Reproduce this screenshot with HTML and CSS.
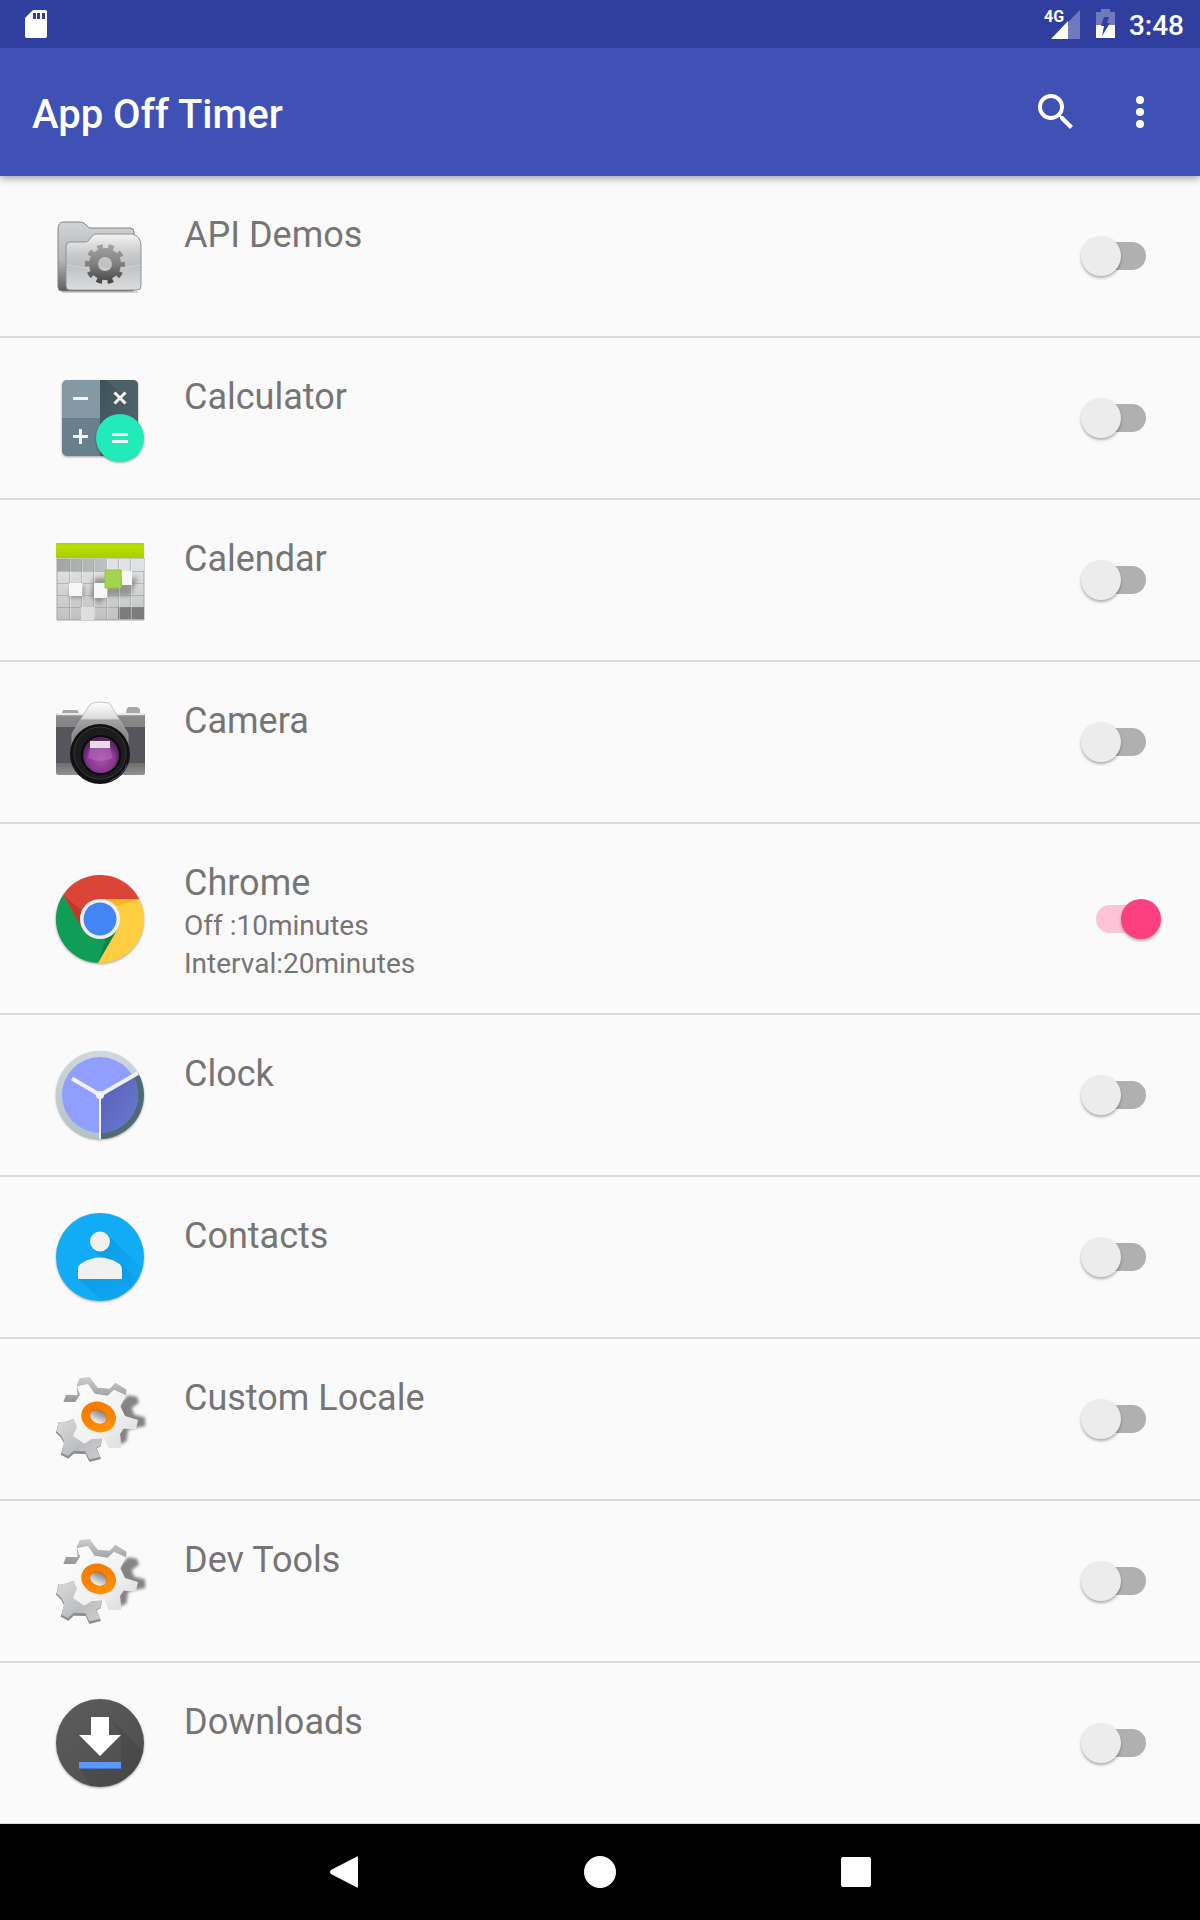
FILE: index.html
```html
<!DOCTYPE html>
<html lang="en">
<head>
<meta charset="utf-8">
<meta name="viewport" content="width=device-width, initial-scale=1">
<title>App Off Timer</title>
<link rel="stylesheet" href="styles.css">
</head>
<body>
<svg class="defs" width="0" height="0" aria-hidden="true">
  <defs>
    <linearGradient id="gearFace" x1="0" y1="0" x2="1" y2="1"><stop offset="0" stop-color="#fff"/><stop offset=".6" stop-color="#f1f1f2"/><stop offset="1" stop-color="#d6d7d9"/></linearGradient>
    <linearGradient id="gearSmall" x1="0" y1="0" x2="1" y2="1"><stop offset="0" stop-color="#dcdcdd"/><stop offset=".6" stop-color="#bcbdbf"/><stop offset="1" stop-color="#cfcfd1"/></linearGradient>
    <linearGradient id="gearEdge" x1="0" y1="0" x2="0" y2="1"><stop offset="0" stop-color="#cdced0"/><stop offset="1" stop-color="#858688"/></linearGradient>
    <linearGradient id="gearRing" x1="0" y1="0" x2="1" y2="1"><stop offset="0" stop-color="#f27600"/><stop offset=".5" stop-color="#fb8200"/><stop offset="1" stop-color="#ff9c10"/></linearGradient>
    <linearGradient id="gearHole" x1="0" y1="0" x2="0" y2="1"><stop offset="0" stop-color="#858688"/><stop offset="1" stop-color="#f5f5f5"/></linearGradient>
    <filter id="gearBlur" x="-50%" y="-50%" width="200%" height="200%"><feGaussianBlur stdDeviation="5"/></filter>
    <symbol id="gears" viewBox="36 33 288 288">
      <path d="M240 130l25-24 26 4 6 18-22 16 8 20 32 8 1 26-30 6-22 6-4 34-20 10-12-70z" fill="#6f7073" opacity=".85" filter="url(#gearBlur)"/>
      <path d="M48 218l8-31 22-2 30-12 14 66 64-2-4 22-12 6 13 32-35 9-11-24-36-1-16 15-23-12 10-34-9-17z" fill="#8d8e90"/>
      <path d="M50 214l7-27 22-2 30-12 14 66 64-4-6 22-13 6 12 28-32 7-12-24-35-2-17 16-20-10 9-32-8-17z" fill="url(#gearSmall)"/>
      <path d="M110 76l9-21 30-4 24 32 36 3 17-18 34 21-2 18-60 40-84-30zM70 126l8-22 40 2-8 22z" fill="url(#gearEdge)"/>
      <path d="M111 79l33-7 20 29 39 6 19-18 36 17-17 33 14 29 39 12-6 28-37-2-11 16 4 41-38 1-14-31-27-2-32 20-34-23 12-28-11-26-36-6 4-42 38 0 14-22z" fill="url(#gearFace)"/>
      <ellipse cx="176" cy="171" rx="53" ry="45" transform="rotate(20 176 171)" fill="url(#gearRing)"/>
      <ellipse cx="175" cy="170" rx="28" ry="21" transform="rotate(24 175 170)" fill="#e06c00"/>
      <ellipse cx="175" cy="171" rx="26" ry="19" transform="rotate(24 175 171)" fill="url(#gearHole)"/>
    </symbol>
  </defs>
</svg>

<header>
  <div class="status-bar">
    <svg width="24" height="30" viewBox="0 0 24 30" role="img" aria-label="SD card"><path d="M9 1h12q2 0 2 2v24q0 2-2 2H3q-2 0-2-2V9z" fill="#fff"/><path d="M9 4h3v6H9zM13 4h3v6h-3zM18 4h3v6h-3z" fill="#303f9f"/></svg>
    <div class="status-icons">
      <svg width="38" height="48" viewBox="0 -9 38 48" role="img" aria-label="4G signal"><path d="M36 1v29h-12V13z" fill="#6f79bc"/><path d="M24 12v18H7z" fill="#fff"/><text class="network" x="0" y="13">4G</text></svg>
      <svg width="19" height="30" viewBox="0 0 19 30" role="img" aria-label="Battery charging"><path d="M5 0h9v3h5v13H0V3h5z" fill="#6f79bc"/><path d="M0 16h19v13H0z" fill="#fff"/><path d="M8 8h5l-2 6h3L6 27l2-10H5z" fill="#303f9f"/></svg>
      <time class="clock">3:48</time>
    </div>
  </div>
  <div class="toolbar">
    <h1>App Off Timer</h1>
    <div class="actions">
      <button type="button" aria-label="Search"><svg width="48" height="48" viewBox="0 0 24 24"><path fill="#fff" d="M15.5 14h-.79l-.28-.27A6.47 6.47 0 0 0 16 9.5 6.5 6.5 0 1 0 9.5 16c1.61 0 3.09-.59 4.23-1.57l.27.28v.79l5 4.99L20.49 19l-4.99-5zm-6 0C7.01 14 5 11.99 5 9.500S7.010 5 9.500 5 14 7.010 14 9.500 11.990 14 9.500 14z"/></svg></button>
      <button type="button" aria-label="More options"><svg width="48" height="48" viewBox="0 0 24 24" fill="#fff"><circle cx="12" cy="6" r="2"/><circle cx="12" cy="12" r="2"/><circle cx="12" cy="18" r="2"/></svg></button>
    </div>
  </div>
</header>

<main>
<ul class="apps">
  <li>
    <svg class="icon" viewBox="0 0 96 96">
      <defs>
        <linearGradient id="folderBack" x1="0" y1="0" x2="0" y2="1"><stop offset="0" stop-color="#d2d3d5"/><stop offset=".55" stop-color="#b5b6b9"/><stop offset="1" stop-color="#5c5d60"/></linearGradient>
        <linearGradient id="folderFront" x1="0" y1="0" x2="0" y2="1"><stop offset="0" stop-color="#f4f4f4"/><stop offset=".35" stop-color="#c9cacb"/><stop offset=".55" stop-color="#bfc0c1"/><stop offset="1" stop-color="#dcddde"/></linearGradient>
        <linearGradient id="folderGear" gradientUnits="userSpaceOnUse" x1="0" y1="36" x2="0" y2="76"><stop offset="0" stop-color="#a5a5a5"/><stop offset=".5" stop-color="#808080"/><stop offset="1" stop-color="#414141"/></linearGradient>
      </defs>
      <path d="M10 84h76" stroke="#000" stroke-opacity=".15" stroke-width="2"/>
      <path d="M6 22q0-8 5-8h17q3 0 5 2l3 3q1 1 3 1h39q4 0 4 4v58q0 1-2 1H10q-4 0-4-4z" fill="url(#folderBack)" stroke="#808285"/>
      <path d="M14 38q0-4 4-4h15q3 0 4-2l3-4q2-2 5-2h35q9 2 9 12v40q0 4-4 4H18q-4 0-4-4z" fill="url(#folderFront)" stroke="#8f9194"/>
      <path d="M15 57q37 8 74 0" fill="none" stroke="#fff" stroke-opacity=".25"/>
      <g fill="none" stroke="url(#folderGear)"><circle cx="53" cy="56" r="11.500" stroke-width="9"/><circle cx="53" cy="56" r="17.500" stroke-width="5" stroke-dasharray="5.500" stroke-dashoffset="2.750"/></g>
    </svg>
    <div class="info"><label for="api-demos">API Demos</label></div>
    <input class="switch" type="checkbox" id="api-demos">
  </li>
  <li>
    <svg class="icon" viewBox="0 0 96 96">
      <defs><clipPath id="calcBody"><rect x="10" y="10" width="76" height="76" rx="5"/></clipPath>
      <linearGradient id="calcDark" x1="0" y1="0" x2="1" y2="1"><stop offset="0" stop-color="#3f5259"/><stop offset="1" stop-color="#546870"/></linearGradient></defs>
      <g class="cast">
        <g clip-path="url(#calcBody)"><path d="M10 10h38v38H10z" fill="#8399a4"/><path d="M10 48h38v38H10z" fill="#67808d"/><path d="M48 10h38v76H48z" fill="url(#calcDark)"/><path d="M48 10h6l32 30V10z" fill="#4c6068"/></g>
      </g>
      <circle class="cast" cx="68" cy="68" r="24" fill="#22ebb9"/>
      <path d="M21 28.500h15M21 66.500h15M28.500 59v15M62.500 22.500l11 11M73.500 22.500l-11 11M60 64.500h16M60 71.500h16" stroke="#f5f5f5" stroke-width="3"/>
    </svg>
    <div class="info"><label for="calculator">Calculator</label></div>
    <input class="switch" type="checkbox" id="calculator">
  </li>
  <li>
    <svg class="icon" viewBox="0 0 96 96">
      <defs>
        <linearGradient id="calHead" x1="0" y1="0" x2="0" y2="1"><stop offset="0" stop-color="#a6cc00"/><stop offset=".15" stop-color="#bbe000"/><stop offset="1" stop-color="#a9cf00"/></linearGradient>
        <linearGradient id="calBody" x1="0" y1="0" x2="0" y2="1"><stop offset="0" stop-color="#e6e6e6"/><stop offset=".5" stop-color="#d4d5d5"/><stop offset="1" stop-color="#bfc0c0"/></linearGradient>
        <linearGradient id="calRow" x1="0" y1="0" x2="1" y2="0"><stop offset="0" stop-color="#a2a3a4"/><stop offset="1" stop-color="#c0c1c2"/></linearGradient>
        <filter id="calBlur" x="-30%" y="-30%" width="160%" height="160%"><feGaussianBlur stdDeviation="2"/></filter>
      </defs>
      <path d="M5 26h87v62H5z" fill="url(#calBody)" stroke="#a5a5a5"/>
      <path d="M5 27h49v12H5z" fill="url(#calRow)"/>
      <path d="M54 27h38v12H54z" fill="#dfe1e4"/>
      <path d="M66 75h26v12H66z" fill="#7c7c7c"/>
      <path d="M42 46h44l-8 18H56l-9 8-9-8zM18 54h14v12H18z" fill="#555" opacity=".5" filter="url(#calBlur)"/>
      <path d="M17.500 27v60M29.500 27v60M41.500 27v60M54.500 27v60M66.500 27v60M78.500 27v60M5 39.500h87M5 51.500h87M5 63.500h87M5 75.500h87" stroke="#8a8c8e" stroke-opacity=".45"/>
      <path d="M18.500 27v60M30.500 27v60M42.500 27v60M55.500 27v60M67.500 27v60M79.500 27v60" stroke="#fff" stroke-opacity=".35"/>
      <path d="M17 51h13v13H17zM42 51h13v15H42zM70 39h10v14H70z" fill="#f7f7f8"/>
      <path d="M29 75h13v13H29z" fill="#dedede"/>
      <path d="M53 38h16v18H53z" fill="#a4d44f" stroke="#93c83c"/>
      <rect x="4" y="11" width="88" height="15" rx="1" fill="url(#calHead)"/>
    </svg>
    <div class="info"><label for="calendar">Calendar</label></div>
    <input class="switch" type="checkbox" id="calendar">
  </li>
  <li>
    <svg class="icon" viewBox="0 0 96 96">
      <defs>
        <linearGradient id="camBody" x1="0" y1="0" x2="0" y2="1"><stop offset="0" stop-color="#d5d5d5"/><stop offset=".06" stop-color="#8a8a8a"/><stop offset=".8" stop-color="#6c6c6c"/><stop offset="1" stop-color="#929292"/></linearGradient>
        <linearGradient id="camTop" x1="0" y1="0" x2="0" y2="1"><stop offset="0" stop-color="#fff"/><stop offset=".3" stop-color="#dcdcdc"/><stop offset=".34" stop-color="#a2a2a2"/><stop offset="1" stop-color="#666"/></linearGradient>
        <radialGradient id="camLens" cx=".5" cy=".6"><stop offset="0" stop-color="#a753ad"/><stop offset=".75" stop-color="#86368f"/><stop offset="1" stop-color="#5c2563"/></radialGradient>
      </defs>
      <path d="M10 19l1-3h14l2 3zM74 19l1-5 2-1h8l3 2v4z" fill="#a5a7a8"/>
      <rect x="4" y="19" width="89" height="62" rx="2" fill="url(#camBody)"/>
      <path d="M5 19h87v2H5z" fill="#e9e9e9"/>
      <path d="M4 33h89v36H4z" fill="#55555b"/>
      <path d="M40 9q8-2 17 0 2 2 3 4l16 27v22H20V40l16-27z" fill="url(#camTop)" stroke="#b0b0b0" stroke-opacity=".7"/>
      <circle cx="48" cy="60" r="30" fill="#121214"/>
      <circle cx="48" cy="59" r="26" fill="#1c1c1f" stroke="#36363a"/>
      <circle cx="49" cy="61" r="20" fill="#09090b"/>
      <circle cx="49" cy="61" r="18" fill="url(#camLens)"/>
      <path d="M38 47h20v7H38z" fill="#e6dce6"/>
      <path d="M38 54h20l3 10q-13 6-25 0z" fill="#bd75c3" opacity=".45"/>
      <path d="M58 87q13-5 17-17" fill="none" stroke="#6d62a8" opacity=".7"/>
    </svg>
    <div class="info"><label for="camera">Camera</label></div>
    <input class="switch" type="checkbox" id="camera">
  </li>
  <li>
    <svg class="icon" viewBox="0 0 96 96">
      <g class="cast">
        <path d="M11 24A44 44 0 0 1 87.200 28H48L30.700 58z" fill="#db4437"/>
        <path d="M87.200 28A44 44 0 0 1 45.700 92L65.300 58 48 28z" fill="#ffcd40"/>
        <path d="M45.700 92A44 44 0 0 1 11 24L30.700 58h34.600z" fill="#0f9d58"/>
      </g>
      <path d="M11 24l17.500 31 3-14z" fill="#a52714" opacity=".45"/>
      <path d="M87 28H52l13 7z" fill="#ea9c00" opacity=".45"/>
      <path d="M46 92l18-31-10 6z" fill="#05623a" opacity=".45"/>
      <circle cx="48" cy="48" r="20" fill="#f1f1f1"/>
      <circle cx="48" cy="48" r="16.500" fill="#4285f4"/>
    </svg>
    <div class="info"><label for="chrome">Chrome</label><p>Off :10minutes</p><p>Interval:20minutes</p></div>
    <input class="switch" type="checkbox" id="chrome" checked>
  </li>
  <li>
    <svg class="icon" viewBox="0 0 96 96">
      <defs>
        <linearGradient id="clockShade" x1="0" y1="0" x2="1" y2="1"><stop offset="0" stop-color="#5560b4"/><stop offset="1" stop-color="#6c7ad4"/></linearGradient>
        <linearGradient id="clockRim" x1="0" y1="0" x2="0" y2="1"><stop offset="0" stop-color="#cfd8dc"/><stop offset="1" stop-color="#b4c2c6"/></linearGradient>
      </defs>
      <circle class="cast" cx="48" cy="48" r="44" fill="url(#clockRim)"/>
      <path d="M48 48l38.100-22A44 44 0 0 1 48 92z" fill="#4f6a75"/>
      <circle cx="48" cy="48" r="38" fill="#8f9eff"/>
      <path d="M48 48l33-19A38 38 0 0 1 48 86z" fill="url(#clockShade)"/>
      <path d="M48 48L20 31.500M48 48l38-22" stroke="#f2f2f2" stroke-width="4"/>
      <path d="M48 48v44" stroke="#f2f2f2" stroke-width="2"/>
      <circle cx="48" cy="48" r="4" fill="#f2f2f2"/>
    </svg>
    <div class="info"><label for="clock">Clock</label></div>
    <input class="switch" type="checkbox" id="clock">
  </li>
  <li>
    <svg class="icon" viewBox="0 0 96 96">
      <defs><clipPath id="contactDisc"><circle cx="48" cy="48" r="44"/></clipPath>
      <linearGradient id="contactShade" x1="0" y1="0" x2="1" y2="1"><stop offset="0" stop-color="#0288d1" stop-opacity=".5"/><stop offset="1" stop-color="#0288d1" stop-opacity="0"/></linearGradient></defs>
      <circle class="cast" cx="48" cy="48" r="44" fill="#12abf6"/>
      <g clip-path="url(#contactDisc)" fill="url(#contactShade)"><path d="M55 25l40 40-16 16-38-41z"/><path d="M70 56l20 20-30 24-34-30z"/></g>
      <circle cx="48" cy="32.500" r="10" fill="#f1f1f1"/>
      <path d="M26 70V60q0-4 4-6 18-11 36 0 4 2 4 6v10z" fill="#f1f1f1"/>
    </svg>
    <div class="info"><label for="contacts">Contacts</label></div>
    <input class="switch" type="checkbox" id="contacts">
  </li>
  <li>
    <svg class="icon"><use href="#gears"/></svg>
    <div class="info"><label for="custom-locale">Custom Locale</label></div>
    <input class="switch" type="checkbox" id="custom-locale">
  </li>
  <li>
    <svg class="icon"><use href="#gears"/></svg>
    <div class="info"><label for="dev-tools">Dev Tools</label></div>
    <input class="switch" type="checkbox" id="dev-tools">
  </li>
  <li>
    <svg class="icon" viewBox="0 0 96 96">
      <defs><clipPath id="downDisc"><circle cx="48" cy="48" r="44"/></clipPath>
      <linearGradient id="downFill" x1="0" y1="0" x2="1" y2="1"><stop offset="0" stop-color="#5c5c5c"/><stop offset="1" stop-color="#4d4d4d"/></linearGradient></defs>
      <circle class="cast" cx="48" cy="48" r="44" fill="url(#downFill)"/>
      <path clip-path="url(#downDisc)" d="M57 22l40 40v40H45L27 73h42V40z" fill="#000" opacity=".08"/>
      <path d="M39 22h18v18h12L48 61 27 40h12z" fill="#fff"/>
      <path d="M27 67h42v7H27z" fill="#5e97f6"/>
      <path d="M27 73h42v1H27z" fill="#4474c9"/>
    </svg>
    <div class="info"><label for="downloads">Downloads</label></div>
    <input class="switch" type="checkbox" id="downloads">
  </li>
</ul>
</main>

<nav class="system-nav" aria-label="System">
  <button type="button" aria-label="Back"><svg width="32" height="32" viewBox="0 0 32 32"><path d="M28 1Q30 -1 30 2V30Q30 33 28 31L3 18Q1 16 3 14z" fill="#fff"/></svg></button>
  <button type="button" aria-label="Home"><svg width="32" height="32" viewBox="0 0 32 32"><circle cx="16" cy="16" r="16" fill="#fff"/></svg></button>
  <button type="button" aria-label="Recent apps"><svg width="32" height="32" viewBox="0 0 32 32"><rect x="1" y="1" width="30" height="30" rx="2" fill="#fff"/></svg></button>
</nav>
</body>
</html>
```
FILE: styles.css
```css
* {
  box-sizing: border-box;
  margin: 0;
  padding: 0;
}

body {
  display: flex;
  flex-direction: column;
  height: 100vh;
  background: #fafafa;
  color: #757575;
  font-family: Roboto, "Noto Sans", sans-serif;
}

.defs {
  position: absolute;
}

button {
  display: grid;
  place-items: center;
  border: 0;
  background: none;
}

svg {
  display: block;
}

header {
  z-index: 1;
  flex: none;
  background: #3f51b5;
  color: #fff;
  box-shadow: 0 2px 8px rgba(0, 0, 0, 0.4);
}

.status-bar {
  display: flex;
  align-items: center;
  justify-content: space-between;
  height: 48px;
  padding: 0 16px 0 24px;
  background: #303f9f;
}

.status-icons {
  display: flex;
  align-items: center;
  gap: 14px;
}

.network {
  fill: #fff;
  font-size: 16px;
  font-weight: 700;
}

.clock {
  font-size: 28px;
  font-weight: 500;
  line-height: 32px;
  padding-top: 4px;
}

.toolbar {
  display: flex;
  align-items: center;
  justify-content: space-between;
  height: 128px;
  padding: 0 36px 0 32px;
}

h1 {
  padding-top: 6px;
  font-size: 40px;
  font-weight: 500;
  line-height: 48px;
}

.actions {
  display: flex;
  gap: 36px;
}

main {
  flex: 1;
  min-height: 0;
  overflow-y: auto;
  scrollbar-width: none;
}

.apps {
  list-style: none;
}

.apps li {
  display: flex;
  align-items: center;
  gap: 36px;
  min-height: 162px;
  padding: 0 39px 0 52px;
  border-bottom: 2px solid #dadada;
}

.icon {
  flex: none;
  width: 96px;
  height: 96px;
}

.cast {
  filter: drop-shadow(0 1px 1px rgba(0, 0, 0, 0.35));
}

.info {
  flex: 1;
  align-self: flex-start;
  padding: 35px 0 30px;
}

.info label {
  display: block;
  font-size: 36px;
  line-height: 48px;
}

.info p {
  font-size: 28px;
  line-height: 38px;
}

.switch {
  display: grid;
  flex: none;
  align-items: center;
  width: 80px;
  height: 40px;
  appearance: none;
}

.switch::before,
.switch::after {
  grid-area: 1 / 1;
  content: "";
}

.switch::before {
  justify-self: center;
  width: 50px;
  height: 28px;
  border-radius: 14px;
  background: #b0b0b0;
}

.switch::after {
  width: 40px;
  height: 40px;
  border-radius: 50%;
  background: #ececec;
  box-shadow: 0 2px 3px rgba(0, 0, 0, 0.3);
}

.switch:checked::before {
  background: #fdc3d7;
}

.switch:checked::after {
  justify-self: end;
  background: #fc4080;
}

.system-nav {
  display: flex;
  flex: none;
  justify-content: center;
  height: 96px;
  background: #000;
}

.system-nav button {
  width: 256px;
}
```
